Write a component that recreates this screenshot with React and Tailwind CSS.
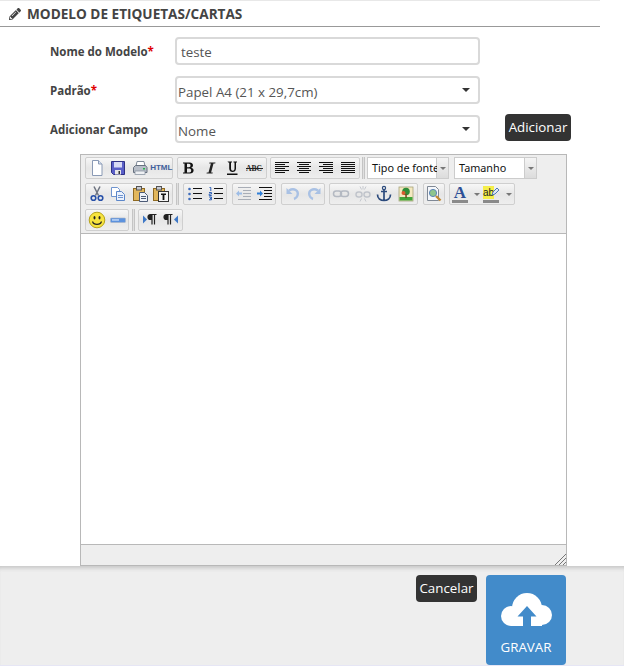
import React from 'react';
import { FaPencilAlt } from 'react-icons/fa';

const Svg = ({ children, className = '' }) => (
  <svg width="18" height="18" viewBox="0 0 18 18" className={className}>{children}</svg>
);

const lines = (rows, color = '#111') =>
  rows.map(([x1, x2, y], i) => <path key={i} d={`M${x1} ${y + 0.5}H${x2}`} stroke={color} strokeWidth="1" />);

const icons = {
  newdoc: <Svg><path d="M4.5 1.5h6l3.500 3.500v11.500h-9.500z" fill="#fff" stroke="#8a9ab5" /><path d="M10.500 1.500v3.500h3.500" fill="#d7e2f2" stroke="#8a9ab5" /></Svg>,
  save: <Svg><path d="M2.500 2.500h13v13h-11l-2-2z" fill="#5a5fc8" stroke="#2f3185" /><rect x="5" y="3" width="8" height="5.500" fill="#d8daf5" /><rect x="6" y="11" width="6" height="4.500" fill="#e8e8e8" /><rect x="9.500" y="12" width="1.500" height="3" fill="#333" /></Svg>,
  print: <Svg><path d="M6 2.500h7l1 5h-9z" fill="#fff" stroke="#7f8a99" /><path d="M2.500 8.500l2-2h10l1.500 2v5h-13.500z" fill="#b8bec8" stroke="#66707f" /><rect x="4" y="12" width="10" height="3.500" fill="#eef0f3" stroke="#7f8a99" strokeWidth=".7" /><rect x="12" y="9" width="2" height="1.500" fill="#27b44a" /></Svg>,
  bold: <Svg><path d="M3 3.500h6.700c4 0 4.300 4.700 1.300 5.300 3.800.5 3.500 5.700-1 5.700h-7v-1h1.500v-9h-1.500zM7 4.700v3.500h2c2 0 2-3.500 0-3.500zM7 9.400v4h2.500c2.300 0 2.300-4 0-4z" fill="#111" /></Svg>,
  italic: <Svg><path d="M7.500 3.500h6l-.3 1h-1.700l-2.400 9h1.700l-.3 1h-6l.3-1h1.700l2.400-9h-1.700z" fill="#222" /></Svg>,
  underline: <Svg><path d="M3.500 2.500h4.500v1h-1v6c0 3 3.500 3 3.500 0v-6h-1v-1h3.500v1h-1v6c0 4.700-6.800 4.700-6.800 0v-6h-1z" fill="#111" /><rect x="3" y="14.500" width="10.500" height="1.500" fill="#111" /></Svg>,
  strike: <Svg><text x="0" y="12" fontSize="7.500" fontWeight="700" fontFamily="Liberation Serif, serif" fill="#222">ABC</text><path d="M0 9.500h17" stroke="#222" /></Svg>,
  left: <Svg>{lines([[2, 16, 3], [2, 12, 5], [2, 16, 7], [2, 12, 9], [2, 16, 11], [2, 12, 13]])}</Svg>,
  center: <Svg>{lines([[2, 16, 3], [4, 14, 5], [2, 16, 7], [4, 14, 9], [2, 16, 11], [4, 14, 13]])}</Svg>,
  right: <Svg>{lines([[2, 16, 3], [6, 16, 5], [2, 16, 7], [6, 16, 9], [2, 16, 11], [6, 16, 13]])}</Svg>,
  justify: <Svg>{lines([[2, 16, 3], [2, 16, 5], [2, 16, 7], [2, 16, 9], [2, 16, 11], [2, 16, 13]])}</Svg>,
  cut: <Svg><path d="M6 1.500l4.500 9M12 1.500l-4.500 9" stroke="#6e7480" strokeWidth="1.500" /><circle cx="5.500" cy="13" r="2.300" fill="none" stroke="#2750a8" strokeWidth="1.600" /><circle cx="12.500" cy="13" r="2.300" fill="none" stroke="#2750a8" strokeWidth="1.600" /></Svg>,
  copy: <Svg><path d="M2.500 2.500h6l2 2v7h-8z" fill="#fff" stroke="#6f94cf" /><path d="M7.500 6.500h5l3 3v6h-8z" fill="#eaf1fc" stroke="#5b86c9" />{lines([[9, 14, 10], [9, 14, 12]], '#6f94cf')}</Svg>,
  paste: <Svg><rect x="2.500" y="3.500" width="11" height="12" fill="#e2b75c" stroke="#8f6a22" /><rect x="5.500" y="1.500" width="5" height="3.500" fill="#c7c9cf" stroke="#555" /><path d="M8.500 7.500h5l3 3v6h-8z" fill="#eef2f8" stroke="#4b5a76" />{lines([[10, 15, 11], [10, 15, 13]], '#4b5a76')}</Svg>,
  pasteText: <Svg><rect x="1.500" y="3.500" width="11" height="12" fill="#e2b75c" stroke="#8f6a22" /><rect x="4.500" y="1.500" width="5" height="3.500" fill="#c7c9cf" stroke="#555" /><rect x="6.500" y="6.500" width="10" height="10" fill="#f4f4f4" stroke="#333" /><path d="M9 8.500h5v1.500h-1.600v5h-1.800v-5h-1.600z" fill="#111" /></Svg>,
  ul: <Svg><circle cx="3.500" cy="4" r="1.300" fill="#3e6cbb" /><circle cx="3.500" cy="9" r="1.300" fill="#3e6cbb" /><circle cx="3.500" cy="14" r="1.300" fill="#3e6cbb" />{lines([[7, 16, 3], [7, 16, 8], [7, 16, 13]])}</Svg>,
  ol: <Svg><path d="M2.500 2.500h1.300v3.500M2 7.500h2.500v1.500h-2.300v1.500h2.500M2 12h2.500v1.200h-1.500M3 13.300h1.500v1.500h-2.500" fill="none" stroke="#2f60b5" />{lines([[7, 16, 3], [7, 16, 8], [7, 16, 13]])}</Svg>,
  outdent: <Svg>{lines([[3, 16, 2], [8, 16, 5], [8, 16, 8], [8, 16, 11], [3, 16, 14]], '#a8adb6')}<path d="M7 7.500h-3v-2l-3 3 3 3v-2h3z" fill="#9cbce6" /></Svg>,
  indent: <Svg>{lines([[3, 16, 2], [8, 16, 5], [8, 16, 8], [8, 16, 11], [3, 16, 14]])}<path d="M1 7.500h3v-2l3 3-3 3v-2h-3z" fill="#2f7fd8" /></Svg>,
  undo: <Svg><path d="M5 5.500c5-3 10 0 8.500 5-.5 2-2 3-3.500 3.500" fill="none" stroke="#a9c1e4" strokeWidth="2.400" /><path d="M2.500 3v6h6z" fill="#a9c1e4" /></Svg>,
  redo: <Svg><path d="M13 5.500c-5-3-10 0-8.500 5 .5 2 2 3 3.500 3.500" fill="none" stroke="#a9c1e4" strokeWidth="2.400" /><path d="M15.500 3v6h-6z" fill="#a9c1e4" /></Svg>,
  link: <Svg><rect x="1.500" y="6" width="8" height="5.500" rx="2.700" fill="none" stroke="#b4b9c2" strokeWidth="1.500" /><rect x="8.500" y="6" width="8" height="5.500" rx="2.700" fill="none" stroke="#b4b9c2" strokeWidth="1.500" /></Svg>,
  unlink: <Svg><rect x="2" y="7" width="6" height="5" rx="2.500" fill="none" stroke="#c0c4cb" strokeWidth="1.400" /><rect x="10" y="7" width="6" height="5" rx="2.500" fill="none" stroke="#c0c4cb" strokeWidth="1.400" /><path d="M6 1.500l1.500 3M12 1.500l-1.500 3M9 1v3.500M6 16.500l1.500-3M12 16.500l-1.500-3" stroke="#c6c9cf" /></Svg>,
  anchor: <Svg><circle cx="9" cy="3" r="1.600" fill="none" stroke="#2b4a7c" strokeWidth="1.200" /><path d="M9 4.500v11M6 6.500h6M2.500 9.500c0 4 3 6 6.500 6s6.500-2 6.500-6" fill="none" stroke="#2b4a7c" strokeWidth="1.700" /></Svg>,
  image: <Svg><rect x="2" y="2" width="14" height="14" fill="#f4e9c0" stroke="#a7a37c" strokeWidth=".8" /><rect x="2.500" y="12" width="13" height="3.500" fill="#40a53a" /><circle cx="9" cy="6.500" r="3.800" fill="#2f8d38" /><circle cx="6.500" cy="8" r="2" fill="#d85b2f" /><rect x="8.300" y="9" width="1.500" height="4" fill="#6e4a20" /></Svg>,
  preview: <Svg><path d="M2.500 1.500h8l3 3v11h-11z" fill="#f5f7fb" stroke="#7f8895" /><circle cx="8" cy="8" r="3.600" fill="#8ec58d" stroke="#5f86b8" /><path d="M11 11l4.500 4.500" stroke="#c48a32" strokeWidth="2.400" /></Svg>,
  smiley: <Svg><circle cx="9" cy="9" r="7.800" fill="#f7e43f" stroke="#b6a31c" /><ellipse cx="6.500" cy="6.800" rx="1" ry="1.700" fill="#222" /><ellipse cx="11.500" cy="6.800" rx="1" ry="1.700" fill="#222" /><path d="M4.500 10.500c1 3.800 8 3.800 9 0" fill="none" stroke="#222" strokeWidth="1.100" /></Svg>,
  hr: <Svg><rect x="1.500" y="7" width="15" height="4.500" rx=".8" fill="#5c92de" stroke="#a8b3c4" strokeWidth=".6" /><rect x="3" y="8.300" width="7" height="1.300" fill="#cfe2fb" /></Svg>,
  ltr: <Svg><path d="M2 4.500v8l4-4z" fill="#3e78c7" /><path d="M11 3.500h-1.500a2.500 2.500 0 0 0 0 5h1.500zM11 3.500v10M13.500 3.500v10M10 3.500h5.500" fill="#222" stroke="#222" strokeWidth="1.200" /></Svg>,
  rtl: <Svg><path d="M6 3.500h-1.500a2.500 2.500 0 0 0 0 5h1.500zM6 3.500v10M8.500 3.500v10M5 3.500h5.500" fill="#222" stroke="#222" strokeWidth="1.200" /><path d="M16 4.500v8l-4-4z" fill="#3e78c7" /></Svg>,
};

const Btn = ({ icon, w = 'w-[22px]', children, className = 'justify-center' }) => (
  <span className={`flex h-full ${w} items-center ${className}`}>{icon ? icons[icon] : children}</span>
);

const Group = ({ children, className = '' }) => (
  <div className={`flex h-[22px] items-center rounded-[2px] border border-[#cfcfcf] bg-gradient-to-b from-[#f7f7f7] via-[#e6e6e6] to-[#eeeeee] ${className}`}>
    {children}
  </div>
);

const Sep = ({ className = 'mx-[3px]' }) => <div className={`h-[22px] w-[3px] border-x border-[#c4c4c4] bg-[#e0e0e0] ${className}`} />;

const Arrow = ({ className = 'ml-[6px]' }) => <span className={`h-0 w-0 border-x-[3px] border-t-[3px] border-x-transparent border-t-[#777] ${className}`} />;

const ToolSelect = ({ label, className }) => (
  <div className="flex h-[22px]">
    <div className={`flex items-center border border-[#cccccc] bg-white pl-[4px] font-['Noto_Sans',sans-serif] text-[10.800px] text-[#111] ${className}`}>{label}</div>
    <div className="flex w-[12px] items-center justify-center border border-l-0 border-[#cccccc] bg-gradient-to-b from-[#f4f4f4] to-[#dcdcdc]">
      <span className="h-0 w-0 border-x-[3px] border-t-[3px] border-x-transparent border-t-[#777]" />
    </div>
  </div>
);

const Field = ({ label, required, children }) => (
  <div className="flex items-center pl-[50px]">
    <label className="w-[125px] pt-[2px] text-[11.500px] font-bold text-[#444]">
      {label}
      {required && <span className="text-[#e00000]">*</span>}
    </label>
    {children}
  </div>
);

const SelectBox = ({ value }) => (
  <div className="relative w-[305px]">
    <select
      defaultValue={value}
      className="h-[28px] w-full appearance-none rounded-[4px] border-2 border-[#d9d9d9] bg-white pl-[1px] pt-[5px] text-[13.333px] text-[#555] outline-none"
    >
      <option>{value}</option>
    </select>
    <span className="pointer-events-none absolute right-[10px] top-[12px] h-0 w-0 border-x-[4px] border-t-[4px] border-x-transparent border-t-[#333]" />
  </div>
);

const DarkBtn = ({ children, className = '' }) => (
  <button type="button" className={`h-[27px] rounded-[4px] bg-[#333333] text-[13.333px] text-white ${className}`}>
    {children}
  </button>
);

export default function App() {
  return (
    <div className="flex h-[666px] w-[624px] flex-col overflow-hidden bg-white font-['Open_Sans',sans-serif]">
      <div className="flex-1">
        {/* Title */}
        <div className="flex h-[27px] w-[600px] items-center gap-[6px] border-y border-t-[#e8e8e8] border-b-[#999999] pl-[9px] text-[#444]">
          <FaPencilAlt className="text-[12px]" />
          <h2 className="text-[13.600px] font-bold leading-none">MODELO DE ETIQUETAS/CARTAS</h2>
        </div>

        <div className="mt-[10px] flex flex-col gap-[11px]">
          <Field label="Nome do Modelo" required>
            <input
              type="text"
              defaultValue="teste"
              className="h-[28px] w-[305px] rounded-[4px] border-2 border-[#d9d9d9] px-[4px] pt-[2px] text-[13.333px] text-[#555] outline-none"
            />
          </Field>
          <Field label="Padrão" required>
            <SelectBox value="Papel A4 (21 x 29,7cm)" />
          </Field>
          <Field label="Adicionar Campo">
            <SelectBox value="Nome" />
            <DarkBtn className="-mt-[3px] ml-[25px] w-[66px]">Adicionar</DarkBtn>
          </Field>
        </div>

        {/* Editor */}
        <div className="ml-[80px] mt-[11px] w-[487px] border border-[#b8b8b8] bg-[#eeeeee]">
          <div className="flex flex-col gap-[4px] px-[4px] pb-[2px] pt-[2px]">
            <div className="flex items-center">
              <Group>
                <Btn w="w-[21.500px]" icon="newdoc" /><Btn w="w-[21.500px]" icon="save" /><Btn w="w-[21.500px]" icon="print" />
                <Btn w="w-[21.500px]"><span className="font-['Liberation_Sans',sans-serif] text-[8px] font-bold text-[#3f5f9c]">HTML</span></Btn>
              </Group>
              <Group className="ml-[4px]"><Btn icon="bold" /><Btn icon="italic" /><Btn icon="underline" /><Btn icon="strike" /></Group>
              <Group className="ml-[3px]"><Btn icon="left" /><Btn icon="center" /><Btn icon="right" /><Btn icon="justify" /></Group>
              <Sep className="ml-[2px] mr-[2px]" />
              <ToolSelect label="Tipo de fonte" className="w-[70px] whitespace-nowrap" />
              <div className="ml-[5px]"><ToolSelect label="Tamanho" className="w-[71px]" /></div>
            </div>
            <div className="flex items-center">
              <Group><Btn w="w-[21.500px]" icon="cut" /><Btn w="w-[21.500px]" icon="copy" /><Btn w="w-[21.500px]" icon="paste" /><Btn w="w-[21.500px]" icon="pasteText" /></Group>
              <Sep />
              <Group className="ml-[1px]"><Btn w="w-[21px]" icon="ul" /><Btn w="w-[21px]" icon="ol" /></Group>
              <Group className="ml-[5px]"><Btn w="w-[21px]" icon="outdent" /><Btn w="w-[21px]" icon="indent" /></Group>
              <Group className="ml-[5px]"><Btn w="w-[21px]" icon="undo" /><Btn w="w-[21px]" icon="redo" /></Group>
              <Group className="ml-[4px]"><Btn w="w-[21.750px]" icon="link" /><Btn w="w-[21.750px]" icon="unlink" /><Btn w="w-[21.750px]" icon="anchor" /><Btn w="w-[21.750px]" icon="image" /></Group>
              <Group className="ml-[5px]"><Btn w="w-[20px]" icon="preview" /></Group>
              <Group className="ml-[4px] border-[#b9cbe6]">
                <Btn w="w-[33px]" className="justify-start pl-[2px]">
                  <span className="flex flex-col items-center">
                    <span className="font-['Liberation_Serif',serif] text-[17px] font-bold leading-[15px] text-[#2d4f96]">A</span>
                    <span className="h-[3px] w-[16px] bg-[#8a8a8a]" />
                  </span>
                  <Arrow />
                </Btn>
                <Btn w="w-[31px]" className="justify-start">
                  <span className="relative flex w-[16px] flex-col">
                    <span className="w-fit bg-[#f5ee4a] font-['Liberation_Sans',sans-serif] text-[10px] leading-[13px] text-[#222]">ab</span>
                    <svg width="9" height="9" viewBox="0 0 9 9" className="absolute right-[-1px] top-[1px]">
                      <path d="M1 8l1-3 4-4 2 2-4 4z" fill="#dfe7f3" stroke="#4f7ab5" />
                    </svg>
                    <span className="mt-[1px] h-[3px] w-[16px] bg-[#8a8a8a]" />
                  </span>
                  <Arrow className="ml-[7px]" />
                </Btn>
              </Group>
            </div>
            <div className="flex items-center">
              <Group><Btn w="w-[21px]" icon="smiley" /><Btn w="w-[21px]" icon="hr" /></Group>
              <Sep />
              <Group><Btn w="w-[21.500px]" icon="ltr" /><Btn w="w-[21.500px]" icon="rtl" /></Group>
            </div>
          </div>
          <div className="h-[312px] border-y border-[#b8b8b8] bg-white" />
          <div className="relative h-[20px]">
            <svg width="12" height="12" viewBox="0 0 12 12" className="absolute bottom-0 right-0">
              <path d="M1 12L12 1M5 12L12 5M9 12L12 9" stroke="#777" strokeWidth="1" />
            </svg>
          </div>
        </div>
      </div>

      {/* Footer */}
      <div className="flex h-[100px] justify-end gap-[9px] border-b border-[#e6e6f5] bg-[#eeeeee] pr-[58px] pt-[9px] shadow-[inset_0_5px_4px_-3px_#c4c4c4]">
        <DarkBtn className="w-[61px]">Cancelar</DarkBtn>
        <button type="button" className="flex h-[90px] w-[80px] flex-col items-center rounded-[4px] bg-[#428bca] text-white">
          <svg width="51" height="33" viewBox="0 0 51 33" className="mt-[18px]" fill="#fff">
            <circle cx="10" cy="23" r="10" />
            <circle cx="26" cy="15" r="15" />
            <circle cx="41" cy="22" r="10" />
            <rect x="10" y="20" width="31" height="13" />
            <path d="M26 13l9.500 10.500h-5.500v9.500h-8v-9.500h-5.500z" fill="#428bca" />
          </svg>
          <span className="mt-[12px] text-[13.333px]">GRAVAR</span>
        </button>
      </div>
    </div>
  );
}
